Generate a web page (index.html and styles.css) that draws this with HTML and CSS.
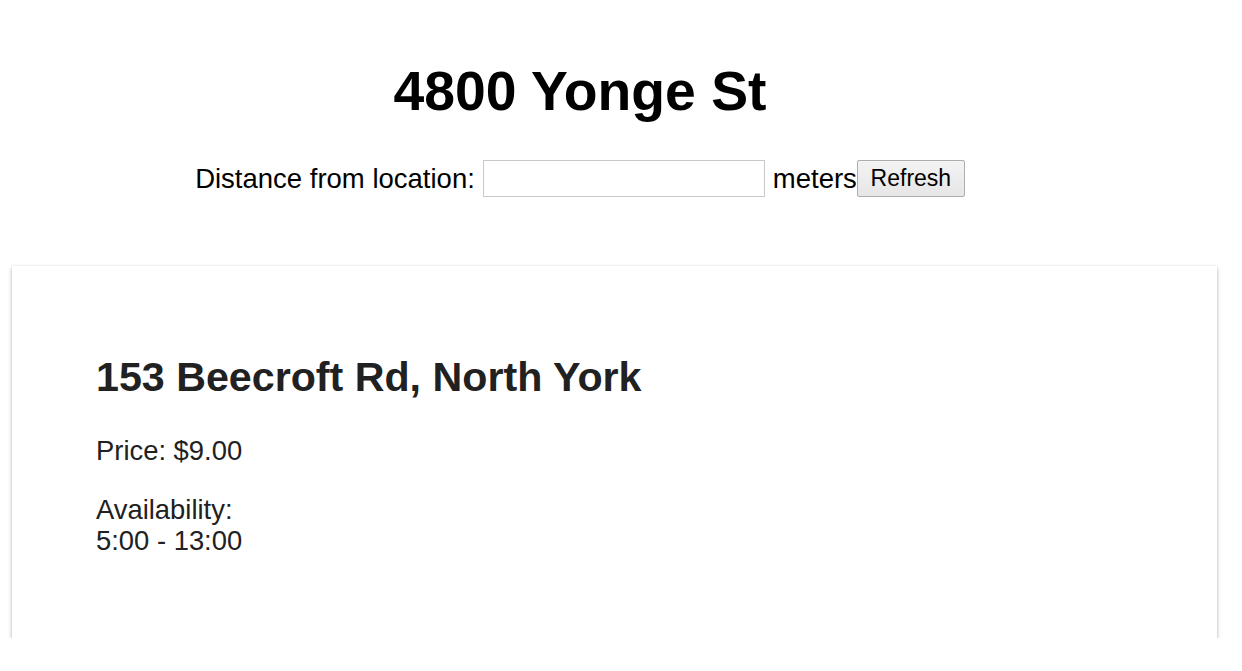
FILE: index.html
```html
<!DOCTYPE html>
<html>
<head>
<meta charset="utf-8">
<link rel="stylesheet" href="styles.css">
</head>
<body>
<header class="top">
  <h1 class="title">4800 Yonge St</h1>
  <div class="filter">
    <label class="label" for="dist">Distance from location:</label>
    <input id="dist" class="field" type="text">
    <span class="unit">meters</span><button class="btn">Refresh</button>
  </div>
</header>
<section class="card">
  <h2 class="card-title">153 Beecroft Rd, North York</h2>
  <p class="line">Price: $9.00</p>
  <p class="line">Availability:<br>5:00 - 13:00</p>
</section>
</body>
</html>
```
FILE: styles.css
```css
html, body {
  margin: 0;
  padding: 0;
  background: #fff;
}
body {
  font-family: "Liberation Sans", Arial, sans-serif;
  color: #000;
}
.top {
  width: 1160px;
  text-align: center;
}
.title {
  font-size: 55.3px;
  font-weight: bold;
  margin: 60px 0 0;
  line-height: 63px;
}
.filter {
  margin-top: 37px;
  display: flex;
  justify-content: center;
  align-items: center;
  font-size: 27.5px;
  height: 37px;
}
.label {
  margin-right: 8px;
}
.field {
  box-sizing: border-box;
  width: 282px;
  height: 37px;
  border: 1px solid #c8c8c8;
  margin: 0 8px 0 0;
  padding: 0;
  font-size: 22px;
}
.unit {
  line-height: 37px;
}
.btn {
  box-sizing: border-box;
  width: 108px;
  height: 37px;
  margin: 0;
  padding: 0;
  font-family: "Liberation Sans", Arial, sans-serif;
  font-size: 23px;
  color: #000;
  border: 1px solid #adadad;
  border-radius: 2px;
  background: linear-gradient(#f3f3f3, #e6e6e6);
}
.card {
  margin: 69px 25px 0 12px;
  padding: 54px 84px 54px;
  background: #fff;
  box-shadow: 0 2px 4px rgba(0, 0, 0, 0.28), 0 0 2px rgba(0, 0, 0, 0.08);
  color: #212121;
}
.card-title {
  font-size: 41.2px;
  font-weight: bold;
  margin: 34px 0 34px;
  line-height: 47px;
}
.line {
  font-size: 27.4px;
  line-height: 31.5px;
  margin: 0 0 27.4px;
}
.line:last-child {
  margin-bottom: 27px;
}
```
